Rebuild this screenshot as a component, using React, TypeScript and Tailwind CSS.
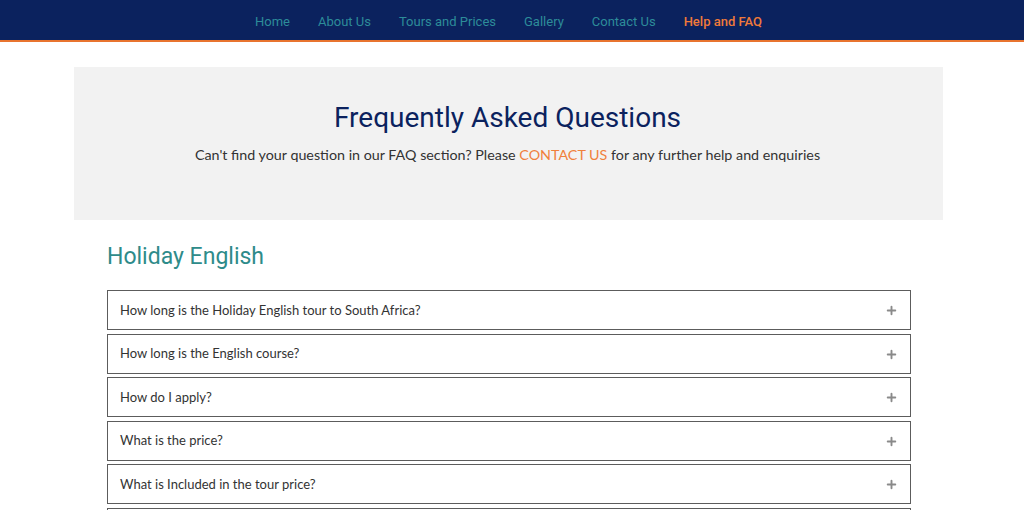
import { Plus } from 'lucide-react';

const NAV = ['Home', 'About Us', 'Tours and Prices', 'Gallery', 'Contact Us', 'Help and FAQ'];

const QUESTIONS = [
  'How long is the Holiday English tour to South Africa?',
  'How long is the English course?',
  'How do I apply?',
  'What is the price?',
  'What is Included in the tour price?',
  'Do I need a visa?',
];

export default function App() {
  return (
    <div className="bg-white overflow-hidden" style={{ height: 510 }}>
      {/* Top nav */}
      <nav className="h-[42px] bg-[#0b225e] border-b-2 border-[#e8742f] flex items-center justify-center gap-7 pr-[7px] pt-[3px] font-['Roboto',sans-serif] text-[13px]">
        {NAV.map(item => (
          <a
            key={item}
            className={item === 'Help and FAQ' ? 'text-[#f07a3a] font-medium' : 'text-[#2d8c99]'}
          >
            {item}
          </a>
        ))}
      </nav>

      {/* Banner */}
      <div className="ml-[74px] w-[869px] mt-[25px] h-[153px] bg-[#f2f2f2] flex flex-col items-center pt-[34px] pr-[2px]">
        <h1 className="font-['Roboto',sans-serif] text-[28px] leading-[34px] text-[#0b225e]">Frequently Asked Questions</h1>
        <p className="mt-[9px] font-['Lato',sans-serif] text-[14.3px] text-[#333]">
          Can't find your question in our FAQ section? Please <span className="text-[#f0803c]">CONTACT US</span> for any further help and enquiries
        </p>
      </div>

      {/* FAQ list */}
      <div className="ml-[107px] w-[804px] mt-[22px]">
        <h2 className="font-['Roboto',sans-serif] text-[23px] leading-[30px] text-[#2e8b8a]">Holiday English</h2>
        <div className="mt-[18px] flex flex-col gap-[3.5px]">
          {QUESTIONS.map(q => (
            <div
              key={q}
              className="h-[40px] shrink-0 border border-[#5c5c5c] flex items-center justify-between pl-[12px] pr-[12px] pt-[1px] font-['Lato',sans-serif] text-[13px] text-[#333]"
            >
              <span>{q}</span>
              <Plus className="w-[13px] h-[13px] text-[#8a8a8a]" strokeWidth={3.5} />
            </div>
          ))}
        </div>
      </div>
    </div>
  );
}
